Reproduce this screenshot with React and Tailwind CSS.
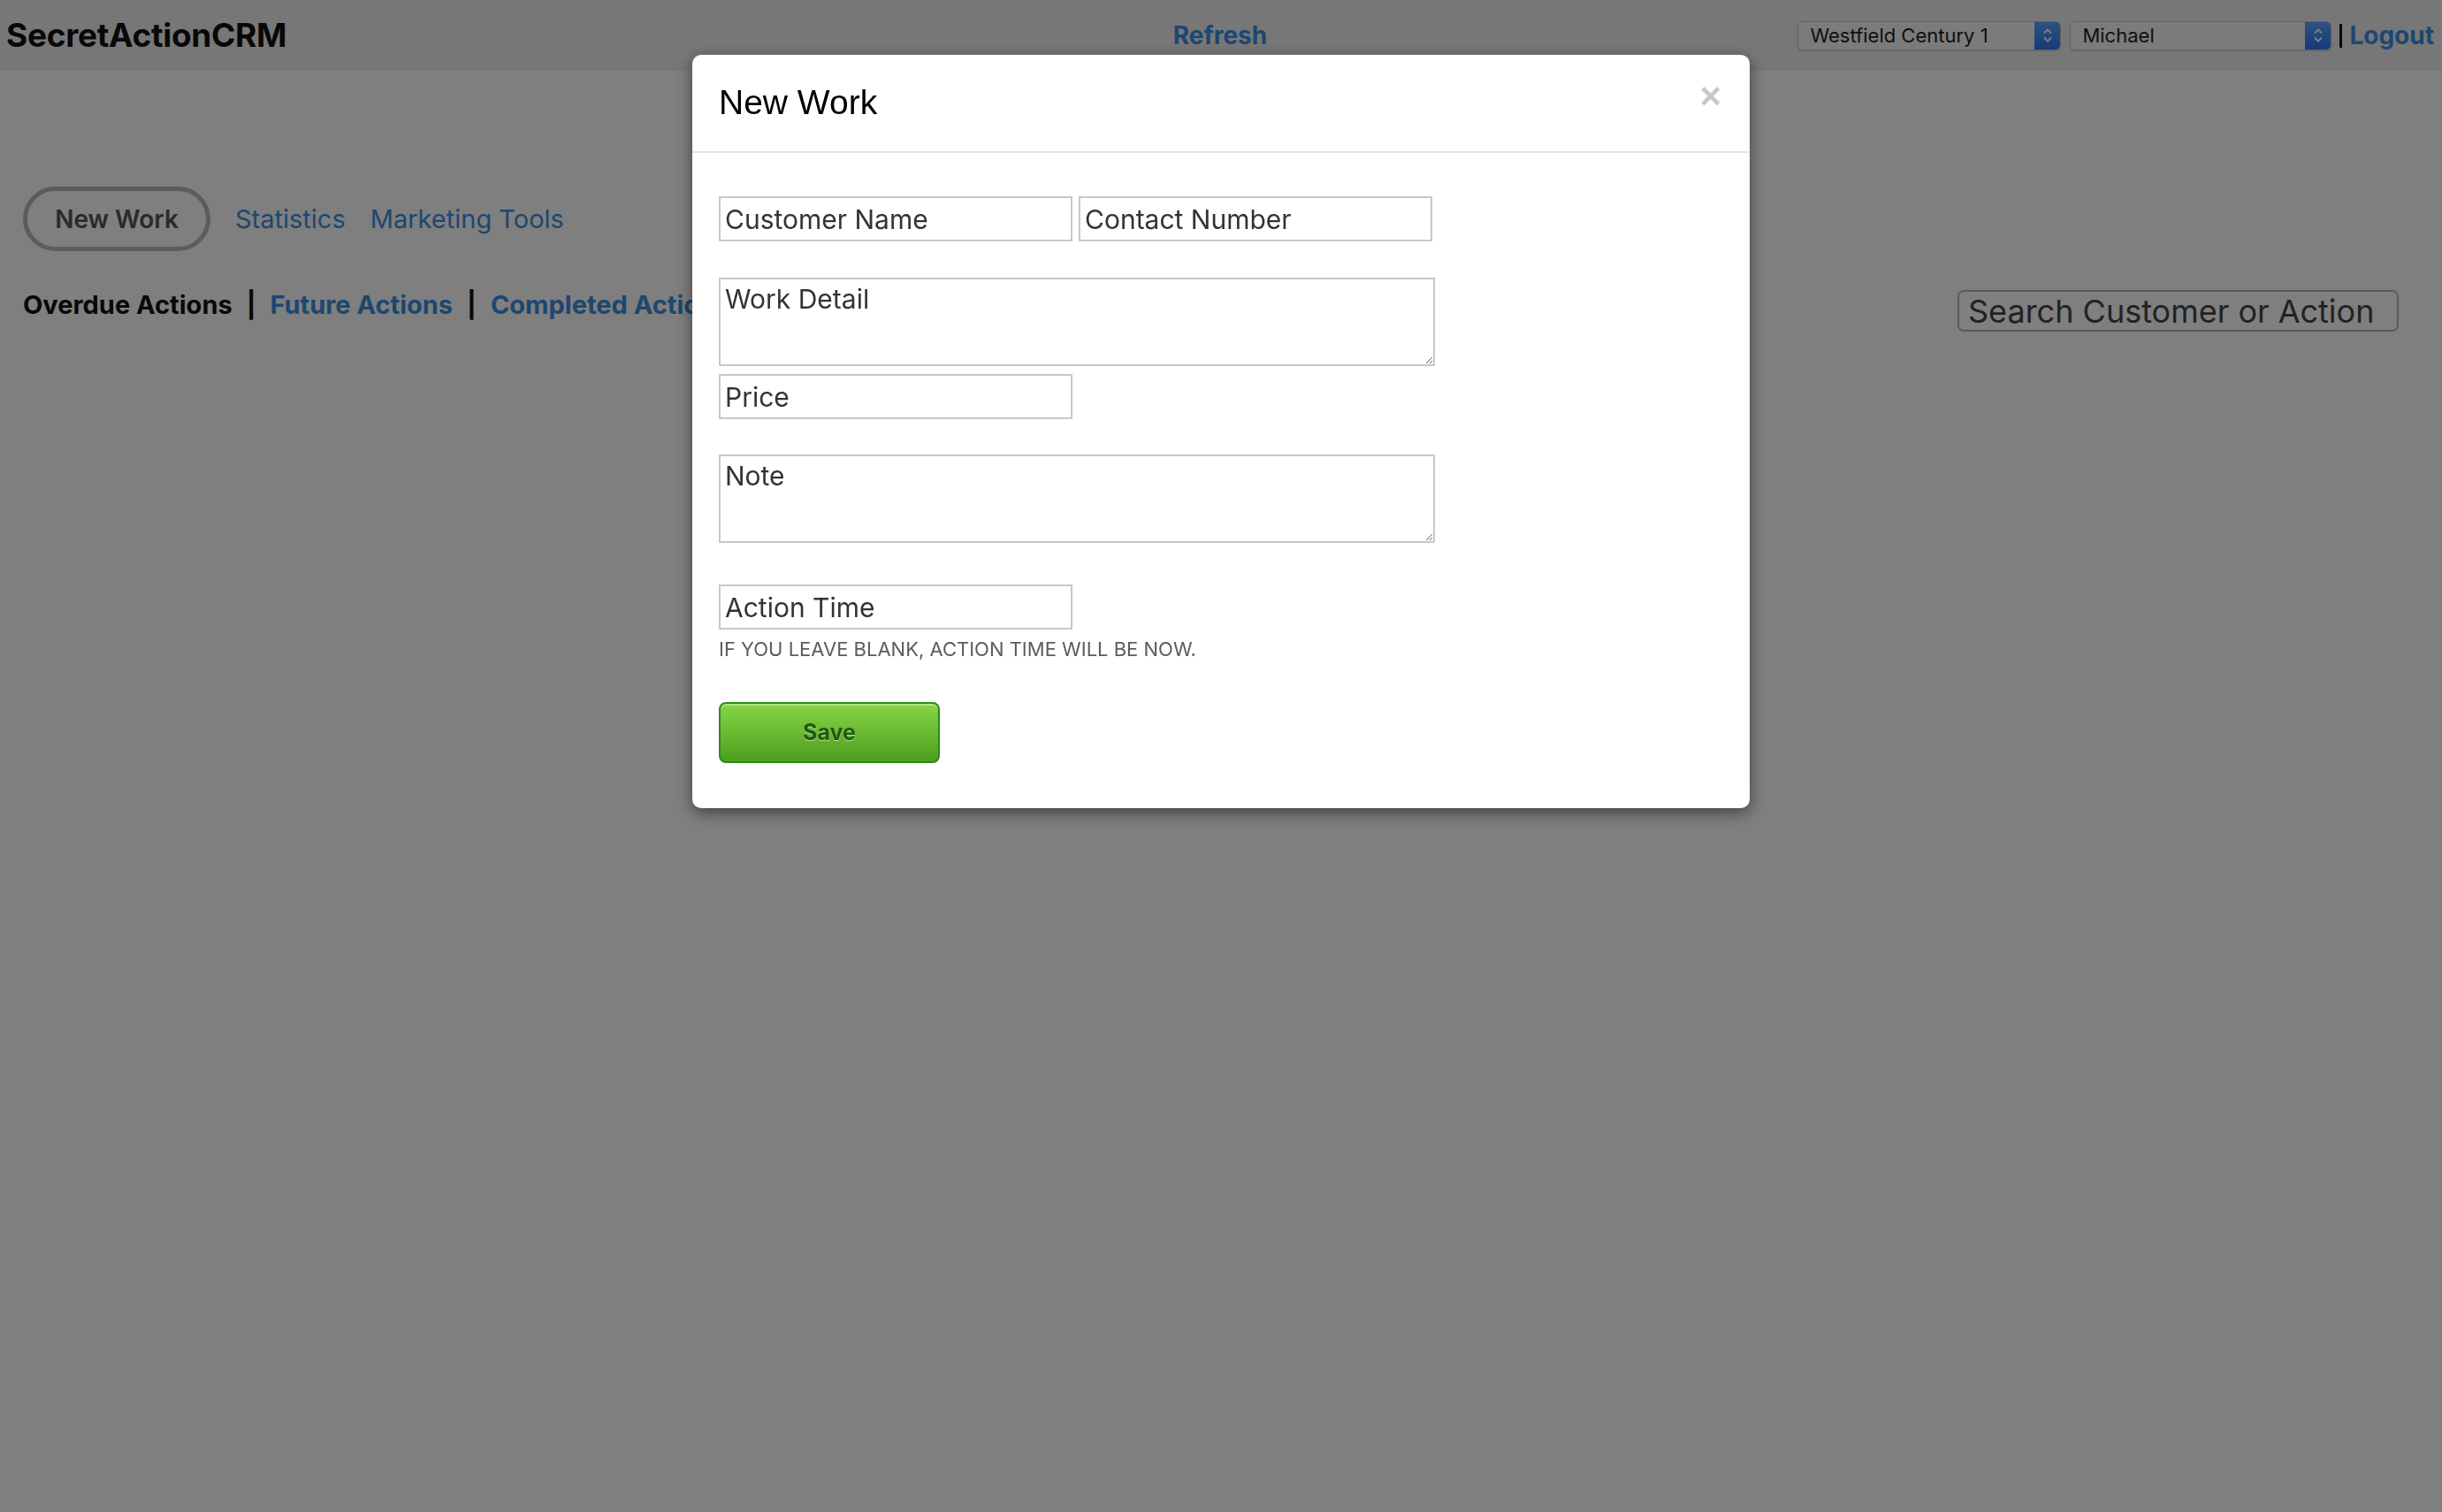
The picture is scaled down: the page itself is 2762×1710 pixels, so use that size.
function Chevrons() {
  return (
    <svg width="12" height="20" viewBox="0 0 12 20" fill="none" stroke="white" strokeWidth="1.8" strokeLinecap="round" strokeLinejoin="round">
      <path d="M2.5 7 L6 3.5 L9.5 7" />
      <path d="M2.5 13 L6 16.5 L9.5 13" />
    </svg>
  );
}

function FakeSelect({ label, width }) {
  return (
    <div
      className="flex h-[33px] items-stretch rounded-[6px] border border-[#c4c4c4] bg-[#f6f6f6] shadow-[0_1px_1px_rgba(0,0,0,0.15)]"
      style={{ width }}
    >
      <div className="flex flex-1 items-center pl-[13px] font-['Inter','Liberation_Sans',sans-serif] text-[22px] text-[#222]">
        {label}
      </div>
      <div className="flex w-[29px] items-center justify-center rounded-r-[5px] bg-linear-to-b from-[#5aa2ff] to-[#2a78f0]">
        <Chevrons />
      </div>
    </div>
  );
}

function TextInput({ placeholder }) {
  return (
    <input
      placeholder={placeholder}
      className="block h-[51px] w-[400px] border-2 border-[#c8c8c8] bg-white px-[5px] font-['Inter','Liberation_Sans',sans-serif] text-[30px] text-[#333] outline-none placeholder:text-[#333]"
    />
  );
}

function TextArea({ placeholder }) {
  return (
    <textarea
      placeholder={placeholder}
      className="block h-[100px] w-[810px] border-2 border-[#c8c8c8] bg-white px-[5px] pt-[2px] font-['Inter','Liberation_Sans',sans-serif] text-[30px] leading-[40px] text-[#333] outline-none placeholder:text-[#333]"
    />
  );
}

export default function App() {
  return (
    <div className="relative min-h-screen bg-white font-['Inter','Liberation_Sans',sans-serif]">
      <header className="grid h-[80px] grid-cols-3 items-center bg-[#eeeeee] pl-[7px] pr-[9px]">
        <div className="text-[37px] font-bold tracking-[-0.3px] text-[#111]">SecretActionCRM</div>
        <div className="text-center text-[28px] font-bold text-[#3a8ee0]">Refresh</div>
        <div className="flex items-center justify-end">
          <FakeSelect label="Westfield Century 1" width={298} />
          <div className="ml-[10px]">
            <FakeSelect label="Michael" width={296} />
          </div>
          <span className="ml-[9px] h-[27px] w-[3px] bg-[#111]" />
          <span className="ml-[8px] text-[28px] font-bold text-[#3a8ee0]">Logout</span>
        </div>
      </header>

      <main className="px-[26px]">
        <div className="mt-[131px] flex items-center">
          <button className="h-[73px] w-[212px] rounded-full border-[5px] border-[#b8b8b8] text-[28px] font-semibold text-[#555]">
            New Work
          </button>
          <span className="ml-[28px] text-[29px] text-[#3a8ee0]">Statistics</span>
          <span className="ml-[28px] text-[29px] text-[#3a8ee0]">Marketing Tools</span>
        </div>

        <div className="mt-[41px] flex items-start justify-between pr-[23px]">
          <div className="flex items-center text-[29px] font-bold leading-[40px]">
            <span className="text-[#111]">Overdue Actions</span>
            <span className="mx-[16px] text-[#111]">|</span>
            <span className="text-[#3a8ee0]">Future Actions</span>
            <span className="mx-[16px] text-[#111]">|</span>
            <span className="text-[#3a8ee0]">Completed Actions</span>
          </div>
          <input
            placeholder="Search Customer or Action"
            className="mt-[3px] h-[47px] w-[499px] rounded-[7px] border-2 border-[#b4b4b4] bg-white px-[10px] text-[36px] text-[#444] outline-none placeholder:text-[#444]"
          />
        </div>
      </main>

      <div className="fixed inset-0 bg-black/50">
        <div className="mx-auto mt-[62px] w-[1196px] rounded-[10px] bg-white shadow-[0_5px_18px_rgba(0,0,0,0.5)]">
          <div className="relative flex h-[111px] items-center border-b-2 border-[#e5e5e5] px-[30px]">
            <h4 className="font-['Liberation_Sans',Arial,sans-serif] text-[39px] text-[#000]">New Work</h4>
            <button className="absolute right-[32px] top-[26px] font-['Liberation_Sans',Arial,sans-serif] text-[42px] font-bold leading-none text-[#c8c8c8]">
              ×
            </button>
          </div>
          <div className="px-[30px] pb-[51px] pt-[49px]">
            <div className="flex gap-[7px]">
              <TextInput placeholder="Customer Name" />
              <TextInput placeholder="Contact Number" />
            </div>
            <div className="mt-[41px]">
              <TextArea placeholder="Work Detail" />
            </div>
            <div className="mt-[9px]">
              <TextInput placeholder="Price" />
            </div>
            <div className="mt-[40px]">
              <TextArea placeholder="Note" />
            </div>
            <div className="mt-[47px]">
              <TextInput placeholder="Action Time" />
            </div>
            <p className="mt-[9px] text-[22px] uppercase leading-[26px] text-[#5c5c5c]">
              If you leave blank, action time will be now.
            </p>
            <button className="mt-[47px] h-[69px] w-[250px] rounded-[8px] border-2 border-[#2e8b1e] bg-linear-to-b from-[#86d645] to-[#4e9e1e] text-[25px] font-bold text-[#1e5a10] shadow-[inset_0_2px_0_rgba(255,255,255,0.35)] [text-shadow:0_1px_0_rgba(255,255,255,0.55)]">
              Save
            </button>
          </div>
        </div>
      </div>
    </div>
  );
}
